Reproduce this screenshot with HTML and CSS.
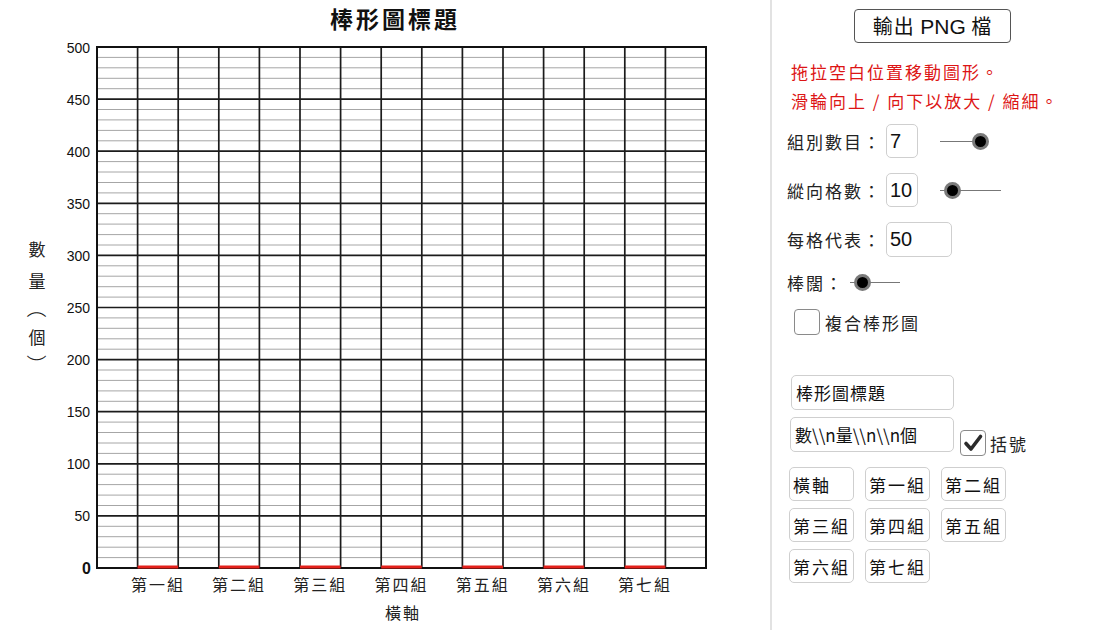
FILE: index.html
```html
<!DOCTYPE html>
<html lang="zh-Hant">
<head>
<meta charset="utf-8">
<title>棒形圖</title>
<link rel="stylesheet" href="styles.css">
</head>
<body>
<div class="app">
  <div class="chart">
    <svg class="plot" width="770" height="630" viewBox="0 0 770 630">
      <text class="title" x="395" y="28">棒形圖標題</text>
      <path class="minor" d="M97 57.4H706M97 67.8H706M97 78.3H706M97 88.7H706
        M97 109.5H706M97 119.9H706M97 130.4H706M97 140.8H706
        M97 161.6H706M97 172H706M97 182.5H706M97 192.9H706
        M97 213.7H706M97 224.1H706M97 234.6H706M97 245H706
        M97 265.8H706M97 276.2H706M97 286.7H706M97 297.1H706
        M97 317.9H706M97 328.3H706M97 338.8H706M97 349.2H706
        M97 370H706M97 380.4H706M97 390.9H706M97 401.3H706
        M97 422.1H706M97 432.5H706M97 443H706M97 453.4H706
        M97 474.2H706M97 484.6H706M97 495.1H706M97 505.5H706
        M97 526.3H706M97 536.7H706M97 547.2H706M97 557.6H706"/>
      <path class="major" d="M97 99.1H706M97 151.2H706M97 203.3H706M97 255.4H706M97 307.5H706
        M97 359.6H706M97 411.7H706M97 463.8H706M97 515.9H706
        M137.6 47V568M178.2 47V568M218.8 47V568M259.4 47V568M300 47V568M340.6 47V568
        M381.2 47V568M421.8 47V568M462.4 47V568M503 47V568M543.6 47V568M584.2 47V568
        M624.8 47V568M665.4 47V568"/>
      <rect class="frame" x="97" y="47" width="609" height="521"/>
      <path class="bars" d="M137.6 567H178.2M218.8 567H259.4M300 567H340.6M381.2 567H421.8M462.4 567H503M543.6 567H584.2M624.8 567H665.4"/>
      <g class="ylab">
        <text x="90" y="53">500</text>
        <text x="90" y="105">450</text>
        <text x="90" y="157">400</text>
        <text x="90" y="209">350</text>
        <text x="90" y="261">300</text>
        <text x="90" y="313">250</text>
        <text x="90" y="365">200</text>
        <text x="90" y="417">150</text>
        <text x="90" y="469">100</text>
        <text x="90" y="521">50</text>
        <text class="zero" x="91" y="574">0</text>
      </g>
      <g class="ytitle">
        <text x="37" y="256">數</text>
        <text x="37" y="288">量</text>
        <text class="paren" x="37" y="308" transform="rotate(90 37 308)">（</text>
        <text x="37" y="344">個</text>
        <text class="paren" x="37" y="364.5" transform="rotate(90 37 364.5)">）</text>
      </g>
      <g class="xlab">
        <text x="157.9" y="591">第一組</text>
        <text x="239.1" y="591">第二組</text>
        <text x="320.3" y="591">第三組</text>
        <text x="401.5" y="591">第四組</text>
        <text x="482.7" y="591">第五組</text>
        <text x="563.9" y="591">第六組</text>
        <text x="645.1" y="591">第七組</text>
        <text x="403" y="619">橫軸</text>
      </g>
    </svg>
  </div>
  <div class="divider"></div>
  <aside class="panel">
    <button class="export">輸出 <span class="latin">PNG</span> 檔</button>
    <p class="hint">拖拉空白位置移動圖形。<br>滑輪向上 / 向下以放大 / 縮細。</p>

    <div class="row row-groups">
      <span class="label">組別數目：</span>
      <input class="field num" type="text" value="7">
      <div class="slider s-groups"><span class="knob"></span></div>
    </div>

    <div class="row row-cells">
      <span class="label">縱向格數：</span>
      <input class="field num" type="text" value="10">
      <div class="slider s-cells"><span class="knob"></span></div>
    </div>

    <div class="row row-per">
      <span class="label">每格代表：</span>
      <input class="field num wide" type="text" value="50">
    </div>

    <div class="row row-width">
      <span class="label short">棒闊：</span>
      <div class="slider s-width"><span class="knob"></span></div>
    </div>

    <label class="row row-combo">
      <span class="box"></span>
      <span class="box-text">複合棒形圖</span>
    </label>

    <input class="field text" type="text" value="棒形圖標題">

    <div class="row row-ytitle">
      <input class="field text" type="text" value="數\\n量\\n\\n個">
      <label class="check">
        <span class="box checked">
          <svg width="24" height="24" viewBox="0 0 24 24"><path d="M5 12.5 L10 18 L19.5 5.5"/></svg>
        </span>
        <span class="box-text">括號</span>
      </label>
    </div>

    <div class="names">
      <input class="field name" type="text" value="橫軸">
      <input class="field name" type="text" value="第一組">
      <input class="field name" type="text" value="第二組">
      <input class="field name" type="text" value="第三組">
      <input class="field name" type="text" value="第四組">
      <input class="field name" type="text" value="第五組">
      <input class="field name" type="text" value="第六組">
      <input class="field name" type="text" value="第七組">
    </div>
  </aside>
</div>
</body>
</html>
```
FILE: styles.css
```css
* { box-sizing: border-box; }

html, body {
  margin: 0;
  padding: 0;
  background: #ffffff;
}

body {
  font-family: "Noto Sans CJK TC", "Liberation Sans", sans-serif;
  color: #111;
  width: 1100px;
  height: 630px;
  overflow: hidden;
}

.app {
  display: flex;
  height: 630px;
}

.chart {
  width: 770px;
  flex: none;
}

.plot { display: block; }

.plot text {
  font-family: "Noto Sans CJK TC", "Liberation Sans", sans-serif;
  fill: #111;
}

.plot .title {
  font-size: 23px;
  font-weight: 700;
  letter-spacing: 3px;
  text-anchor: middle;
}

.minor {
  stroke: #a6a6a6;
  stroke-width: 1;
  fill: none;
}

.major {
  stroke: #1c1c1c;
  stroke-width: 1.7;
  fill: none;
}

.frame {
  fill: none;
  stroke: #111;
  stroke-width: 2;
}

.bars {
  stroke: #e3201b;
  stroke-width: 3;
  fill: none;
}

.plot .ylab text {
  font-family: "Liberation Sans", sans-serif;
  font-size: 14px;
  text-anchor: end;
}

.plot .ylab .zero {
  font-size: 16px;
  font-weight: 700;
}

.plot .ytitle text {
  font-size: 17px;
  text-anchor: middle;
  fill: #222;
}

.plot .ytitle .paren {
  font-size: 20px;
  dominant-baseline: central;
  font-weight: 300;
}

.plot .xlab text {
  font-size: 16px;
  letter-spacing: 2px;
  text-anchor: middle;
  fill: #222;
}

.divider {
  width: 2px;
  flex: none;
  background: #e2e2e2;
}

.panel {
  flex: 1;
  padding: 9px 0 0 15px;
  display: flex;
  flex-direction: column;
  align-items: flex-start;
}

.export {
  margin: 0 0 0 67px;
  width: 157px;
  height: 34px;
  padding: 0;
  border: 1px solid #555;
  border-radius: 4px;
  background: #fff;
  font-family: "Noto Sans CJK TC", "Liberation Sans", sans-serif;
  font-size: 20px;
  line-height: 32px;
  color: #111;
  letter-spacing: 1px;
}

.export .latin {
  font-family: "Liberation Sans", sans-serif;
  font-size: 21px;
  letter-spacing: 0;
}

.hint {
  margin: 14px 0 0 4px;
  color: #dd1515;
  font-size: 17px;
  line-height: 29px;
  letter-spacing: 2px;
}

.row {
  display: flex;
  align-items: center;
}

.label {
  width: 99px;
  flex: none;
  font-size: 17px;
  letter-spacing: 2px;
  color: #222;
}

.label.short { width: 63px; }

.field {
  border: 1px solid #cfcfcf;
  border-radius: 5px;
  background: #fff;
  color: #111;
  outline: none;
  margin: 0;
}

.field.num {
  width: 32px;
  height: 34px;
  padding: 0 0 0 3px;
  font-family: "Liberation Sans", sans-serif;
  font-size: 20px;
}

.field.num.wide { width: 66px; }

.row-groups { margin-top: 9px; }
.row-cells { margin-top: 15px; }
.row-per { margin-top: 15px; }
.row-per .field { height: 35px; }
.row-width { margin-top: 13px; height: 24px; }

.slider {
  position: relative;
  height: 20px;
  flex: none;
}

.slider::before {
  content: "";
  position: absolute;
  left: 0;
  right: 0;
  top: 9.5px;
  height: 1px;
  background: #777;
}

.knob {
  position: absolute;
  top: 1.5px;
  width: 17px;
  height: 17px;
  margin-left: -8.5px;
  border-radius: 50%;
  background: #000;
  border: 3px solid #7a7a7a;
}

.s-groups { margin-left: 22px; width: 41px; }
.s-groups .knob { left: 40px; }

.s-cells { margin-left: 22px; width: 61px; }
.s-cells .knob { left: 12px; }

.s-width { margin-left: 0; width: 50px; }
.s-width .knob { left: 12px; }

.row-combo {
  margin: 15px 0 0 7px;
  height: 26px;
}

.box {
  width: 26px;
  height: 26px;
  flex: none;
  border: 1px solid #8a8a8a;
  border-radius: 4px;
  background: #fff;
  display: flex;
  align-items: center;
  justify-content: center;
}

.box svg path {
  fill: none;
  stroke: #2b2b2b;
  stroke-width: 3.6;
  stroke-linecap: round;
  stroke-linejoin: round;
}

.box-text {
  margin-left: 5px;
  font-size: 17px;
  letter-spacing: 2px;
  color: #222;
}

.field.text {
  width: 163px;
  height: 35px;
  padding: 0 0 0 4px;
  font-family: "Noto Sans CJK TC", "Liberation Sans", sans-serif;
  font-size: 17px;
  letter-spacing: 1px;
}

.panel > .field.text {
  margin: 40px 0 0 4px;
}

.row-ytitle {
  margin: 7px 0 0 3px;
  align-items: flex-start;
}

.row-ytitle .field.text {
  width: 164px;
  letter-spacing: 0;
}

.check {
  display: flex;
  align-items: center;
  margin: 13px 0 0 6px;
}

.check .box-text { margin-left: 4px; }

.names {
  margin: 11px 0 0 2px;
  display: grid;
  grid-template-columns: repeat(3, 65px);
  column-gap: 11px;
  row-gap: 7px;
}

.field.name {
  width: 65px;
  height: 34px;
  padding: 0 0 0 3px;
  font-family: "Noto Sans CJK TC", "Liberation Sans", sans-serif;
  font-size: 17px;
  letter-spacing: 2px;
}
```
